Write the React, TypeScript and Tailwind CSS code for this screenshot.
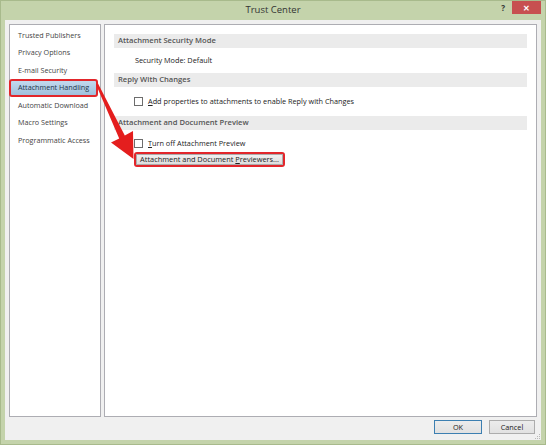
const navItems = [
  "Trusted Publishers",
  "Privacy Options",
  "E-mail Security",
  "Attachment Handling",
  "Automatic Download",
  "Macro Settings",
  "Programmatic Access",
];

function SectionBar({ title }: { title: string }) {
  return (
    <div className="h-[14px] bg-[#ebebeb] flex items-center pl-[4px] text-[7.6px] font-semibold text-[#555]">
      {title}
    </div>
  );
}

function Checkbox() {
  return <div className="w-[9px] h-[9px] bg-white border border-[#6d6d6d] shrink-0" />;
}

export default function App() {
  return (
    <div className="relative w-[546px] h-[445px] bg-[#c4d3ab] shadow-[inset_0_0_0_1px_#a8ba8c] flex flex-col font-['Open_Sans',sans-serif] text-[#222]">
      {/* title bar */}
      <div className="h-[20px] grid grid-cols-[1fr_auto_1fr] shrink-0">
        <div />
        <div className="text-[9.5px] text-[#333] leading-[20px]">Trust Center</div>
        <div className="flex justify-end items-start pr-[5px] pt-[1px]">
          <span className="text-[8px] font-bold text-[#333] leading-[13px] mr-[7px]">?</span>
          <div className="w-[29px] h-[13px] bg-[#c75050] flex items-center justify-center text-white text-[8px] font-bold leading-none">
            ✕
          </div>
        </div>
      </div>

      {/* body */}
      <div className="mx-[5px] h-[420px] bg-[#f0f0f0] flex flex-col pt-[4px] px-[4px]">
        <div className="flex gap-[3px] h-[393px]">
          <div className="w-[92px] bg-white border border-[#adadb3] pt-[1.5px] text-[7.2px] text-[#444]">
            {navItems.map((item) =>
              item === "Attachment Handling" ? (
                <div
                  key={item}
                  className="h-[18px] -ml-[1px] mr-[2px] -my-[0.25px] rounded-[3px] border-2 border-[#e2262b] bg-gradient-to-b from-[#c2d9ee] to-[#9fc0dd] flex items-center pl-[7px] text-[#23364a]"
                >
                  {item}
                </div>
              ) : (
                <div key={item} className="h-[17.5px] flex items-center pl-[8px]">
                  {item}
                </div>
              )
            )}
          </div>

          <div className="flex-1 bg-white border border-[#adadb3] px-[9px] pt-[9px] text-[7.3px]">
            <SectionBar title="Attachment Security Mode" />
            <div className="h-[25px] flex items-center pl-[21px]">Security Mode: Default</div>

            <SectionBar title="Reply With Changes" />
            <div className="h-[29px] flex items-center pl-[20px] gap-[5px]">
              <Checkbox />
              <span>
                <span className="underline">A</span>dd properties to attachments to enable Reply with Changes
              </span>
            </div>

            <SectionBar title="Attachment and Document Preview" />
            <div className="h-[14px] mt-[6px] flex items-center pl-[20px] gap-[5px]">
              <Checkbox />
              <span>
                <span className="underline">T</span>urn off Attachment Preview
              </span>
            </div>
            <div className="pl-[20px] mt-[2px]">
              <div className="w-[151px] h-[15px] rounded-[3px] border-2 border-[#e2262b] flex">
                <div className="flex-1 bg-gradient-to-b from-[#efefef] to-[#dedede] border border-[#acacac] flex items-center justify-center text-[7.4px]">
                  Attachment and Document&nbsp;<span className="underline">P</span>reviewers...
                </div>
              </div>
            </div>
          </div>
        </div>

        <div className="flex justify-end gap-[7px] mt-[3px] pr-[2px] text-[7.3px]">
          <div className="w-[48px] h-[14px] border border-[#3c7fb1] bg-gradient-to-b from-[#ececec] to-[#e1e1e1] flex items-center justify-center">
            OK
          </div>
          <div className="w-[46px] h-[14px] border border-[#acacac] bg-gradient-to-b from-[#ececec] to-[#e1e1e1] flex items-center justify-center">
            Cancel
          </div>
        </div>
      </div>

      {/* resize grip */}
      <svg className="absolute left-[535px] top-[434px]" width="6" height="6" viewBox="0 0 6 6">
        <rect x="4" y="0" width="1" height="1" fill="#b8b8b8" />
        <rect x="2" y="2" width="1" height="1" fill="#b8b8b8" />
        <rect x="4" y="2" width="1" height="1" fill="#b8b8b8" />
        <rect x="0" y="4" width="1" height="1" fill="#b8b8b8" />
        <rect x="2" y="4" width="1" height="1" fill="#b8b8b8" />
        <rect x="4" y="4" width="1" height="1" fill="#b8b8b8" />
      </svg>

      {/* annotation arrow */}
      <svg className="absolute inset-0 pointer-events-none" width="546" height="445" viewBox="0 0 546 445">
        <polygon
          points="96.0,84.5 98.0,83.5 124.8,135.6 133,131 133.5,159 111,142.5 119.2,138.4"
          fill="#e41e1e"
        />
      </svg>
    </div>
  );
}
